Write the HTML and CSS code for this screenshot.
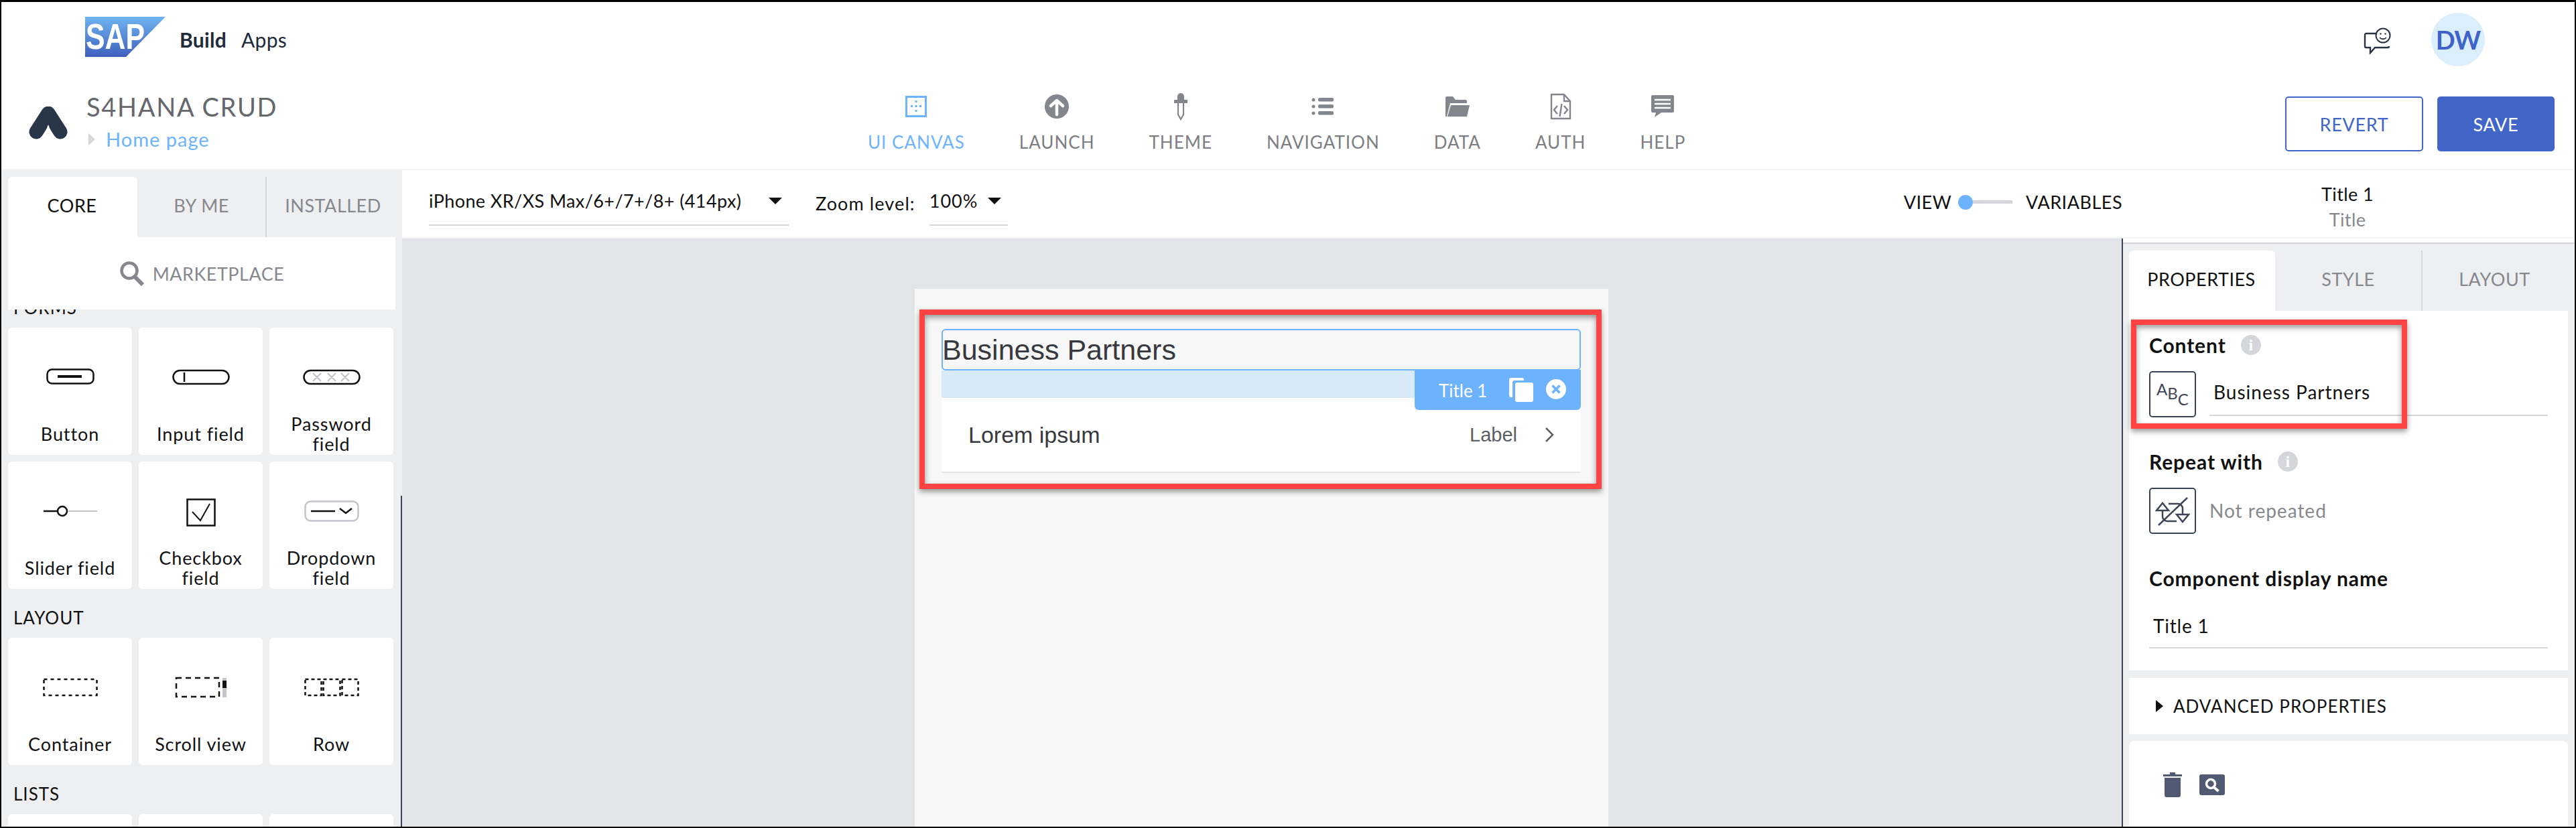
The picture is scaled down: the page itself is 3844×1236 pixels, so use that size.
FILE: index.html
```html
<!DOCTYPE html>
<html lang="en">
<head>
    <meta charset="UTF-8">
    <title>SAP Build Apps - S4HANA CRUD</title>
    <link rel="stylesheet" href="styles.css">
</head>
<body>
<div class="frame">
    <!-- shell header -->
    <header class="shell">
        <svg class="sap-logo" width="120" height="60" viewBox="0 0 120 60">
            <defs>
                <linearGradient id="sapGrad" x1="0" y1="0" x2="0" y2="1">
                    <stop offset="0" stop-color="#6fb4f0"/>
                    <stop offset="1" stop-color="#3f60bd"/>
                </linearGradient>
            </defs>
            <polygon points="0,0 120,0 61,60 0,60" fill="url(#sapGrad)"/>
            <text x="1" y="48" class="sap-word" textLength="88" lengthAdjust="spacingAndGlyphs">SAP</text>
        </svg>
        <span class="shell-build">Build</span>
        <span class="shell-apps">Apps</span>
        <svg class="shell-chat" width="42" height="40" viewBox="0 0 42 40" fill="none" stroke="#2a3343" stroke-width="2.4">
            <path d="M20 9H4a2 2 0 0 0-2 2v17a2 2 0 0 0 2 2h6v8l7-8h19a2 2 0 0 0 2-2"/>
            <circle cx="29" cy="12" r="10.5" fill="#fff" stroke-width="2"/>
            <circle cx="25.5" cy="9.5" r="1.2" fill="#2a3343" stroke="none"/>
            <circle cx="32.5" cy="9.5" r="1.2" fill="#2a3343" stroke="none"/>
            <path d="M24 15c2.5 3 7.500 3 10 0" stroke-width="1.8"/>
        </svg>
        <div class="avatar">DW</div>
    </header>

    <!-- app bar -->
    <div class="appbar">
        <svg class="app-logo" width="58" height="50" viewBox="0 0 58 50">
            <polyline points="11,38 29,10 47,38" fill="none" stroke="#293548" stroke-width="21" stroke-linecap="round" stroke-linejoin="round"/>
            <path d="M29 27l-4 10h8z" fill="#fff"/>
        </svg>
        <div class="app-title">
            <div class="app-name">S4HANA CRUD</div>
            <div class="app-page"><span class="page-arrow"></span>Home page</div>
        </div>
        <nav class="app-nav">
            <div class="nav-item active">
                <svg width="32" height="32" viewBox="0 0 32 32" fill="#6db3fd">
                    <rect x="1.500" y="1.500" width="29" height="29" fill="none" stroke="#6db3fd" stroke-width="3"/>
                    <rect x="14.500" y="7" width="3" height="3"/><rect x="8" y="14" width="3" height="3"/><rect x="14.500" y="14" width="3" height="3"/><rect x="21" y="14" width="3" height="3"/><rect x="14.500" y="21" width="3" height="3"/>
                </svg>
                <span>UI CANVAS</span>
            </div>
            <div class="nav-item">
                <svg width="36" height="36" viewBox="0 0 36 36">
                    <circle cx="18" cy="18" r="18" fill="#83868c"/>
                    <path d="M18 30V10M9 17l9-8 9 8" fill="none" stroke="#fff" stroke-width="4.500" stroke-linecap="round" stroke-linejoin="round"/>
                </svg>
                <span>LAUNCH</span>
            </div>
            <div class="nav-item">
                <svg width="22" height="40" viewBox="0 0 22 40">
                    <path d="M6 10V5a5 5 0 0 1 10 0v5h5v5H1v-5z" fill="#83868c"/>
                    <path d="M7 15v17l4 7 4-7V15" fill="none" stroke="#83868c" stroke-width="2.200"/>
                </svg>
                <span>THEME</span>
            </div>
            <div class="nav-item">
                <svg width="34" height="28" viewBox="0 0 34 28" fill="#83868c">
                    <circle cx="3" cy="4" r="2.500"/><circle cx="3" cy="14" r="2.500"/><circle cx="3" cy="24" r="2.500"/>
                    <rect x="10" y="1" width="23" height="5.500" rx="2"/><rect x="10" y="11" width="23" height="5.500" rx="2"/><rect x="10" y="21" width="23" height="5.500" rx="2"/>
                </svg>
                <span>NAVIGATION</span>
            </div>
            <div class="nav-item">
                <svg width="36" height="30" viewBox="0 0 36 30" fill="#83868c">
                    <path d="M0 2a2 2 0 0 1 2-2h9l4 5h15a2 2 0 0 1 2 2v3H7L2 30H0z"/>
                    <path d="M8 13h28l-4 17H3z"/>
                </svg>
                <span>DATA</span>
            </div>
            <div class="nav-item">
                <svg width="32" height="40" viewBox="0 0 32 40" fill="none" stroke="#83868c" stroke-width="2.400">
                    <path d="M2 2h19l9 10v26H2z" stroke-linejoin="round"/>
                    <path d="M21 2v10h9"/>
                    <path d="M11 19l-5 6 5 6M21 19l5 6-5 6M17.500 16l-3 19"/>
                </svg>
                <span>AUTH</span>
            </div>
            <div class="nav-item">
                <svg width="34" height="34" viewBox="0 0 34 34">
                    <path d="M2 0h30a2 2 0 0 1 2 2v22a2 2 0 0 1-2 2H15L5 33l2-7H2a2 2 0 0 1-2-2V2a2 2 0 0 1 2-2z" fill="#83868c"/>
                    <path d="M5 7h24M5 13h24M5 19h24" stroke="#fff" stroke-width="2.500"/>
                </svg>
                <span>HELP</span>
            </div>
        </nav>
        <div class="app-actions">
            <button class="btn btn-outline">REVERT</button>
            <button class="btn btn-primary">SAVE</button>
        </div>
    </div>

    <div class="workspace">
        <!-- component palette -->
        <aside class="palette">
            <div class="tabs palette-tabs">
                <div class="tab active">CORE</div>
                <div class="tab tab-split">BY ME</div>
                <div class="tab">INSTALLED</div>
            </div>
            <div class="marketplace">
                <svg width="38" height="38" viewBox="0 0 38 38" fill="none" stroke="#85878d" stroke-width="4.500">
                    <circle cx="15" cy="15" r="11.500"/>
                    <path d="M23 24l12 12" stroke-width="6"/>
                </svg>
                <span>MARKETPLACE</span>
            </div>
            <div class="palette-scroll">
                <div class="palette-inner">
                    <h4 class="group-title">FORMS</h4>
                    <div class="cards">
                        <div class="card">
                            <svg class="card-icon" width="72" height="26" viewBox="0 0 72 26" fill="none" stroke="#111" stroke-width="2.500">
                                <rect x="1.500" y="1.500" width="69" height="21" rx="7"/>
                                <path d="M17 12h36" stroke-width="4"/>
                            </svg>
                            <div class="card-label">Button</div>
                        </div>
                        <div class="card">
                            <svg class="card-icon" width="86" height="26" viewBox="0 0 86 26" fill="none" stroke="#111" stroke-width="2.500">
                                <rect x="1.500" y="3" width="83" height="20" rx="10"/>
                                <path d="M18 6v14"/>
                            </svg>
                            <div class="card-label">Input field</div>
                        </div>
                        <div class="card">
                            <svg class="card-icon" width="86" height="26" viewBox="0 0 86 26" fill="none" stroke="#111" stroke-width="2.500">
                                <rect x="1.500" y="3" width="83" height="20" rx="10"/>
                                <path d="M15 7l12 12M27 7L15 19M37 7l12 12M49 7L37 19M57 7l12 12M69 7L57 19" stroke="#c4c5ca" stroke-width="2.200"/>
                            </svg>
                            <div class="card-label">Password field</div>
                        </div>
                        <div class="card">
                            <svg class="card-icon" width="82" height="26" viewBox="0 0 82 26" fill="none">
                                <path d="M38 13h43" stroke="#c4c5ca" stroke-width="2"/>
                                <path d="M1 13h20" stroke="#111" stroke-width="2.500"/>
                                <circle cx="29" cy="13" r="7" stroke="#111" stroke-width="2.500"/>
                            </svg>
                            <div class="card-label">Slider field</div>
                        </div>
                        <div class="card">
                            <svg class="card-icon check-icon" width="44" height="42" viewBox="0 0 44 42" fill="none" stroke="#111">
                                <rect x="1.500" y="1.500" width="41" height="39" stroke-width="2.500"/>
                                <path d="M9 20l12 13L35 8" stroke-width="2"/>
                            </svg>
                            <div class="card-label">Checkbox field</div>
                        </div>
                        <div class="card">
                            <svg class="card-icon" width="82" height="32" viewBox="0 0 82 32" fill="none">
                                <rect x="1.500" y="1.500" width="79" height="29" rx="8" stroke="#c4c5ca" stroke-width="2.500"/>
                                <path d="M10 16h36" stroke="#111" stroke-width="2.500"/>
                                <path d="M53 12l9 7 9-7" stroke="#111" stroke-width="2.500"/>
                            </svg>
                            <div class="card-label">Dropdown field</div>
                        </div>
                    </div>

                    <h4 class="group-title">LAYOUT</h4>
                    <div class="cards">
                        <div class="card">
                            <svg class="card-icon" width="82" height="28" viewBox="0 0 82 28" fill="none">
                                <rect x="1.500" y="2" width="79" height="24" stroke="#111" stroke-width="2.500" stroke-dasharray="5 5"/>
                            </svg>
                            <div class="card-label">Container</div>
                        </div>
                        <div class="card">
                            <svg class="card-icon" width="78" height="32" viewBox="0 0 78 32" fill="none">
                                <rect x="2" y="2" width="64" height="28" stroke="#111" stroke-width="2.500" stroke-dasharray="8 6"/>
                                <rect x="71" y="2" width="6" height="29" fill="#c4c5ca"/>
                                <rect x="71" y="6" width="6" height="11" fill="#111"/>
                            </svg>
                            <div class="card-label">Scroll view</div>
                        </div>
                        <div class="card">
                            <svg class="card-icon" width="82" height="28" viewBox="0 0 82 28" fill="none" stroke="#111" stroke-width="2.500" stroke-dasharray="5 4">
                                <rect x="1.500" y="2" width="24" height="24"/>
                                <rect x="28.500" y="2" width="25" height="24"/>
                                <rect x="56.500" y="2" width="24" height="24"/>
                            </svg>
                            <div class="card-label">Row</div>
                        </div>
                    </div>

                    <h4 class="group-title">LISTS</h4>
                    <div class="cards">
                        <div class="card"></div>
                        <div class="card"></div>
                        <div class="card"></div>
                    </div>
                </div>
            </div>
            <div class="palette-thumb"></div>
        </aside>

        <div class="center">
            <!-- toolbar -->
            <div class="toolbar">
                <div class="select select-device">
                    <span>iPhone XR/XS Max/6+/7+/8+ (414px)</span>
                    <i class="caret"></i>
                </div>
                <span class="zoom-label">Zoom level:</span>
                <div class="select select-zoom">
                    <span>100%</span>
                    <i class="caret"></i>
                </div>
                <div class="view-switch">
                    <span>VIEW</span>
                    <div class="switch-track"></div>
                    <span>VARIABLES</span>
                </div>
                <div class="selected-info">
                    <div class="selected-name">Title 1</div>
                    <div class="selected-type">Title</div>
                </div>
            </div>

            <div class="stage">
                <!-- phone canvas -->
                <main class="canvas">
                    <div class="phone">
                        <div class="title-box">Business Partners</div>
                        <div class="title-band">
                            <div class="title-badge">
                                <span>Title 1</span>
                                <svg width="38" height="36" viewBox="0 0 38 36" fill="#fff">
                                    <path d="M3 0h16a3 3 0 0 1 3 3v1H8a3 3 0 0 0-3 3v22H3a3 3 0 0 1-3-3V3a3 3 0 0 1 3-3z"/>
                                    <rect x="9" y="7" width="27" height="29" rx="3"/>
                                </svg>
                                <svg width="30" height="30" viewBox="0 0 30 30">
                                    <circle cx="15" cy="15" r="15" fill="#fff"/>
                                    <path d="M9.500 9.500l11 11M20.500 9.500l-11 11" stroke="#6cb2fd" stroke-width="3.500"/>
                                </svg>
                            </div>
                        </div>
                        <div class="list-row">
                            <span class="list-title">Lorem ipsum</span>
                            <span class="list-label">Label</span>
                            <svg width="14" height="24" viewBox="0 0 14 24" fill="none" stroke="#5d5f63" stroke-width="2.500">
                                <path d="M2 2l10 10L2 22"/>
                            </svg>
                        </div>
                        <div class="mark mark-canvas"></div>
                    </div>
                </main>

                <!-- properties panel -->
                <aside class="inspector">
                    <div class="inspector-inner">
                        <div class="tabs inspector-tabs">
                            <div class="tab active">PROPERTIES</div>
                            <div class="tab tab-split">STYLE</div>
                            <div class="tab">LAYOUT</div>
                        </div>
                        <section class="props">
                            <div class="mark mark-props"></div>
                            <div class="prop-title prop-first">Content <i class="info">i</i></div>
                            <div class="prop-value">
                                <div class="bind-box abc"><span class="abc-a">A</span><span class="abc-b">B</span><span class="abc-c">C</span></div>
                                <div class="value-text underlined">Business Partners</div>
                            </div>
                            <div class="prop-title">Repeat with <i class="info">i</i></div>
                            <div class="prop-value">
                                <div class="bind-box">
                                    <svg width="52" height="44" viewBox="0 0 52 44" fill="none" stroke="#3f4556" stroke-width="2.500">
                                        <path d="M2 21l9-11 9 11zM32 27l9 11 9-11z"/>
                                        <path d="M11 21v9a7 7 0 0 0 7 7h14M41 27v-9a7 7 0 0 0-7-7H20"/>
                                        <path d="M5 43L48 2"/>
                                    </svg>
                                </div>
                                <div class="value-text muted">Not repeated</div>
                            </div>
                            <div class="prop-title prop-name">Component display name</div>
                            <div class="name-input">Title 1</div>
                        </section>
                        <section class="advanced">
                            <i class="advanced-arrow"></i>
                            <span>ADVANCED PROPERTIES</span>
                        </section>
                        <section class="actions">
                            <svg width="28" height="37" viewBox="0 0 28 37" fill="#525a73">
                                <path d="M0 3h10V0h8v3h10v3H0z"/>
                                <path d="M2 8h24v26a3 3 0 0 1-3 3H5a3 3 0 0 1-3-3z"/>
                            </svg>
                            <svg class="action-search" width="38" height="31" viewBox="0 0 38 31">
                                <rect width="38" height="31" rx="3" fill="#525a73"/>
                                <circle cx="17" cy="14" r="6.500" fill="none" stroke="#fff" stroke-width="3.500"/>
                                <path d="M21.500 19l7 6" stroke="#fff" stroke-width="4"/>
                            </svg>
                        </section>
                    </div>
                </aside>
            </div>
        </div>
    </div>
</div>
</body>
</html>
```

FILE: styles.css
```css
* { box-sizing: border-box; }

html, body { margin: 0; padding: 0; }

body {
    width: 3844px;
    height: 1236px;
    overflow: hidden;
    background: #000;
    font-family: Lato, "Open Sans", sans-serif;
    color: #111;
}

.frame {
    margin: 3px 2px 0;
    width: 3840px;
    height: 1231px;
    background: #fff;
    overflow: hidden;
    display: flex;
    flex-direction: column;
}

/* shell header */
.shell {
    height: 86px;
    flex: none;
    display: flex;
    align-items: flex-start;
    padding: 22px 0 0 125px;
}
.sap-word { font-family: "Liberation Sans", sans-serif; font-weight: 700; font-size: 54px; fill: #fff; }
.shell-build { margin: 16px 0 0 21px; font-size: 30px; font-weight: 700; color: #202a3c; line-height: 36px; letter-spacing: .3px; }
.shell-apps { margin: 16px 0 0 22px; font-size: 30px; color: #202a3c; line-height: 36px; letter-spacing: .3px; }
.shell-chat { margin: 16px 0 0 auto; }
.avatar {
    width: 80px;
    height: 80px;
    margin: -6px 134px 0 59px;
    border-radius: 50%;
    background: #dbeefe;
    color: #3f64c9;
    font-size: 38px;
    font-weight: 700;
    letter-spacing: -1px;
    display: flex;
    align-items: center;
    justify-content: center;
}

/* app bar */
.appbar {
    height: 165px;
    flex: none;
    display: flex;
    align-items: flex-start;
    border-bottom: 2px solid #f5f5f6;
    position: relative;
}
.app-logo { margin: 70px 0 0 41px; }
.app-title { margin: 47px 0 0 28px; width: 360px; }
.app-name { font-size: 38px; line-height: 46px; color: #66676c; letter-spacing: 1.7px; white-space: nowrap; }
.app-page { display: flex; align-items: center; font-size: 29px; line-height: 36px; color: #6db3fd; margin-top: 8px; letter-spacing: 1px; }
.page-arrow {
    width: 0;
    height: 0;
    margin: 0 16px 0 3px;
    border-left: 10px solid #d5d6da;
    border-top: 9px solid transparent;
    border-bottom: 9px solid transparent;
}
.app-nav { display: flex; gap: 81px; margin-left: 806px; }
.nav-item {
    height: 160px;
    padding-top: 45px;
    font-size: 26px;
    color: #7c7e83;
    letter-spacing: 1px;
    display: flex;
    flex-direction: column;
    align-items: center;
    white-space: nowrap;
}
.nav-item svg { height: 50px; }
.nav-item span { margin-top: 12px; line-height: 32px; }
.nav-item.active { color: #6db3fd; }
.app-actions { display: flex; gap: 21px; margin: 55px 0 0 auto; padding-right: 30px; }
.btn {
    height: 82px;
    font: inherit;
    font-size: 27px;
    border-radius: 5px;
    letter-spacing: .7px;
    padding: 0;
}
.btn-outline { width: 206px; background: #fff; border: 2px solid #4166c8; color: #4166c8; }
.btn-primary { width: 175px; background: #4166c8; border: 0; color: #fff; }

/* main area */
.workspace { flex: 1; display: flex; min-height: 0; }

.palette {
    width: 598px;
    flex: none;
    background: #eeeff1;
    position: relative;
    display: flex;
    flex-direction: column;
    overflow: hidden;
}
.tabs { display: flex; font-size: 27px; letter-spacing: .5px; flex: none; }
.tab { display: flex; align-items: center; justify-content: center; color: #86888e; border-right: 2px solid transparent; padding-bottom: 5px; }
.tab.active { background: #fff; color: #111; border-radius: 6px 6px 0 0; }
.palette-tabs { height: 100px; padding: 10px 0 0 10px; }
.palette-tabs .tab:nth-child(1) { width: 193px; }
.palette-tabs .tab:nth-child(2) { width: 193px; }
.palette-tabs .tab:nth-child(3) { width: 200px; }
.tab-split { border-right-color: #d5d6da; }
.marketplace {
    flex: none;
    height: 108px;
    margin: 0 10px;
    background: #fff;
    display: flex;
    align-items: center;
    justify-content: center;
    gap: 12px;
    color: #86888e;
    font-size: 27px;
    letter-spacing: .5px;
}
.palette-scroll { flex: 1; overflow: hidden; min-height: 0; }
.palette-inner { margin-top: -46px; padding-left: 10px; }
.group-title {
    margin: 0;
    padding: 26px 0 13px 8px;
    height: 73px;
    font-size: 26px;
    font-weight: 400;
    line-height: 34px;
    letter-spacing: 1px;
}
.cards { display: grid; grid-template-columns: repeat(3, 185px); grid-auto-rows: 190px; gap: 10px; }
.card {
    background: #fff;
    border-radius: 6px;
    display: flex;
    flex-direction: column;
    align-items: center;
}
.card-icon { height: 60px; margin-top: 44px; flex: none; }
.check-icon { margin-top: 46px; }
.card-label {
    width: 165px;
    height: 60px;
    margin-top: 25px;
    flex: none;
    display: flex;
    align-items: center;
    justify-content: center;
    text-align: center;
    font-size: 27px;
    line-height: 30px;
    letter-spacing: .9px;
}
.check-icon + .card-label { margin-top: 23px; }
.palette-thumb { position: absolute; right: 0; top: 486px; bottom: 0; width: 2px; background: #3a4255; }

.center { flex: 1; min-width: 0; display: flex; flex-direction: column; }

.toolbar {
    height: 102px;
    flex: none;
    display: flex;
    align-items: flex-start;
    border-bottom: 2px solid #f5f5f6;
    font-size: 27px;
    padding-left: 40px;
    letter-spacing: .4px;
}
.select {
    height: 84px;
    display: flex;
    align-items: center;
    justify-content: space-between;
    border-bottom: 2px solid #d5d6da;
    white-space: nowrap;
    margin-top: -1px;
}
.select-device { width: 537px; padding: 11px 10px 0 0; }
.select-zoom { width: 117px; padding: 11px 10px 0 0; }
.select-zoom span { letter-spacing: 1px; }
.caret {
    width: 0;
    height: 0;
    border-top: 10px solid #111;
    border-left: 10px solid transparent;
    border-right: 10px solid transparent;
}
.zoom-label { margin: 33px 21px 0 40px; line-height: 34px; white-space: nowrap; letter-spacing: 1.1px; }
.view-switch { display: flex; align-items: center; margin: 31px 0 0 1337px; line-height: 34px; letter-spacing: .5px; }
.switch-track { width: 81px; height: 22px; margin: 0 20px 0 10px; position: relative; }
.switch-track::before { content: ""; position: absolute; left: 22px; right: 0; top: 8px; height: 5px; background: #d5d6da; }
.switch-track::after { content: ""; position: absolute; left: 0; top: 0; width: 22px; height: 22px; border-radius: 50%; background: #6db3fd; }
.selected-info { margin: 19px 0 0 299px; width: 74px; text-align: center; line-height: 34px; white-space: nowrap; display: flex; flex-direction: column; align-items: center; }
.selected-name { color: #111; }
.selected-type { color: #86888e; margin-top: 4px; }

.stage { flex: 1; display: flex; min-height: 0; }
.canvas { flex: 1; min-width: 0; background: #e2e4e8; padding: 75px 0 0 765px; overflow: hidden; }
.phone { width: 1035px; height: 900px; background: #f7f7f7; padding: 60px 41px 0 40px; position: relative; }

.title-box {
    height: 62px;
    border: 2px solid #6db3fd;
    border-radius: 6px;
    font-family: "Liberation Sans", Arimo, sans-serif;
    font-size: 43px;
    line-height: 58px;
    color: #38393d;
    text-indent: -1px;
}
.title-band { height: 41px; background: #d8e9fa; position: relative; }
.title-badge {
    position: absolute;
    top: -1px;
    right: 0;
    width: 248px;
    height: 60px;
    background: #6cb2fd;
    border-radius: 0 0 6px 6px;
    color: #fff;
    font-size: 26px;
    padding: 12px 0 0 36px;
    display: flex;
    align-items: flex-start;
}
.title-badge span { margin-top: 2px; line-height: 34px; width: 105px; }
.title-badge svg:last-child { margin: 2px 0 0 17px; }
.list-row {
    height: 112px;
    background: #fff;
    border-bottom: 2px solid #e5e5e5;
    display: flex;
    align-items: center;
    padding: 0 40px;
    font-family: "Liberation Sans", Arimo, sans-serif;
}
.list-title { font-size: 34px; color: #38393d; flex: 1; }
.list-label { font-size: 29px; color: #5d5f63; margin-right: 41px; }

/* red annotation boxes */
.mark { position: absolute; border: 8px solid #ff4343; box-shadow: 0 4px 8px rgba(0,0,0,.4), inset 0 4px 8px rgba(0,0,0,.4); pointer-events: none; }
.mark-canvas { left: 7px; top: 31px; width: 1018px; height: 268px; z-index: 2; }
.mark-props { left: 3px; top: 13px; width: 412px; height: 163px; }

/* inspector */
.inspector { width: 676px; flex: none; border-left: 2px solid #3a4255; background: #fff; display: flex; flex-direction: column; }
.inspector-inner { flex: 1; margin-top: 6px; border-top: 2px solid #d5d6da; background: #eeeff1; padding: 10px 10px 0 9px; display: flex; flex-direction: column; min-height: 0; }
.inspector-tabs { height: 90px; }
.inspector-tabs .tab:nth-child(1) { width: 218px; }
.inspector-tabs .tab:nth-child(2) { width: 220px; }
.inspector-tabs .tab:nth-child(3) { width: 217px; }

.props { height: 537px; background: #fff; padding: 0 30px; position: relative; flex: none; }
.prop-title { font-size: 30px; font-weight: 700; line-height: 36px; letter-spacing: .9px; display: flex; align-items: center; white-space: nowrap; }
.prop-first { padding-top: 33px; height: 69px; }
.info {
    width: 30px;
    height: 30px;
    margin-left: 22px;
    border-radius: 50%;
    background: #d5d6da;
    color: #fff;
    font-style: normal;
    font-family: "Liberation Serif", serif;
    font-weight: 700;
    font-size: 24px;
    letter-spacing: 0;
    display: flex;
    align-items: center;
    justify-content: center;
}
.prop-value { display: flex; align-items: stretch; margin: 21px 0 48px; }
.prop-value + .prop-title { height: 36px; }
.bind-box {
    width: 70px;
    height: 69px;
    flex: none;
    border: 2px solid #3a4255;
    border-radius: 5px;
    display: flex;
    align-items: center;
    justify-content: center;
}
.abc { color: #3f4556; font-size: 24px; align-items: flex-start; padding-top: 12px; line-height: 26px; gap: 0; }
.abc-b { margin-top: 6px; }
.abc-c { margin-top: 15px; }
.value-text { flex: 1; margin-left: 20px; font-size: 28px; letter-spacing: 1px; padding: 13px 0 0 6px; line-height: 36px; }
.underlined { border-bottom: 2px solid #d5d6da; margin-bottom: 2px; }
.muted { color: #86888e; padding-left: 0; padding-top: 16px; }
.prop-name { margin-top: 0; }
.name-input { margin-top: 33px; height: 54px; padding: 2px 6px 0; font-size: 28px; line-height: 36px; letter-spacing: .8px; border-bottom: 2px solid #d5d6da; }

.advanced { height: 84px; margin-top: 11px; background: #fff; display: flex; align-items: center; padding-left: 40px; flex: none; font-size: 26px; letter-spacing: 1px; }
.advanced-arrow { width: 0; height: 0; margin-right: 15px; border-left: 11px solid #111; border-top: 9px solid transparent; border-bottom: 9px solid transparent; }

.actions { flex: 1; margin-top: 10px; background: #fff; border-radius: 8px 8px 0 0; padding: 47px 0 0 51px; display: flex; align-items: flex-start; }
.action-search { margin: 3px 0 0 26px; }
```
